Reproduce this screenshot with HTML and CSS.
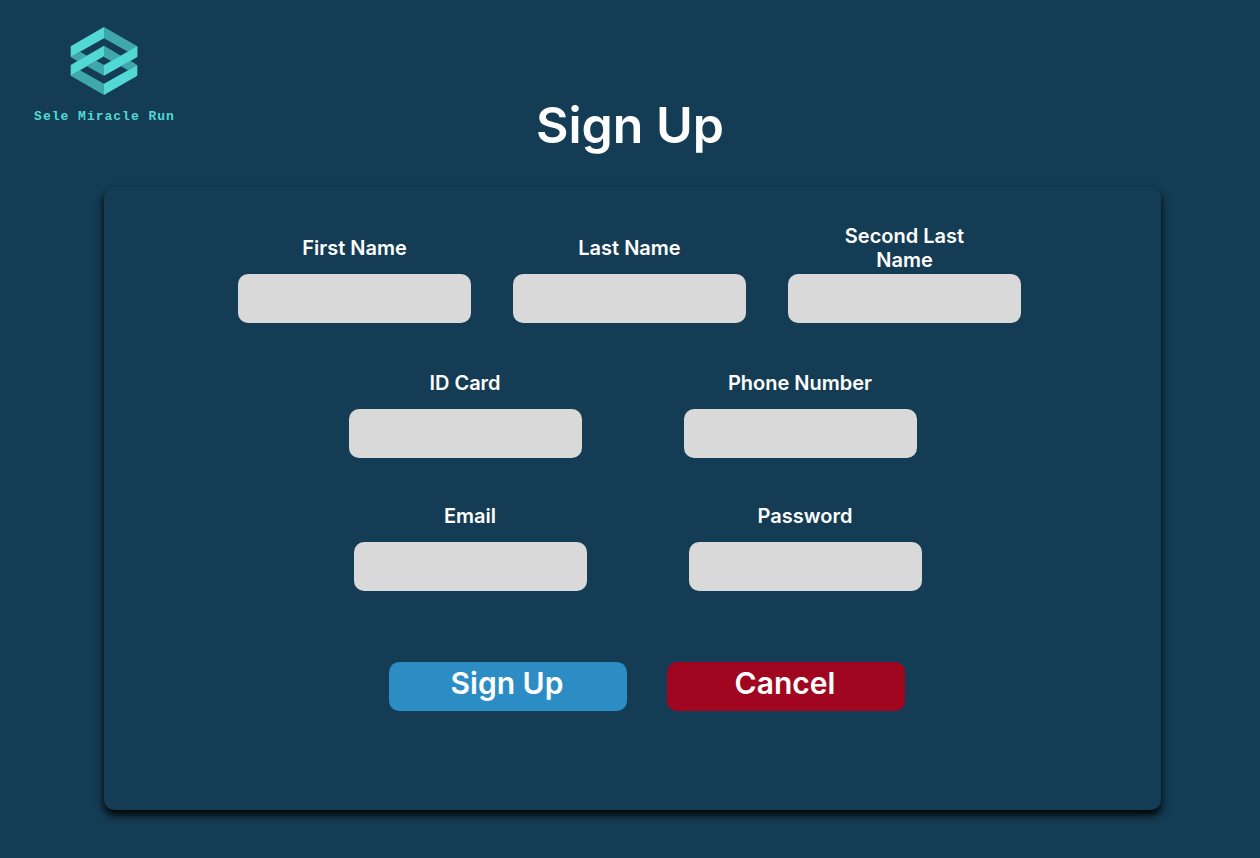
FILE: index.html
```html
<!DOCTYPE html>
<html lang="en">
<head>
<meta charset="utf-8">
<title>Sign Up - Sele Miracle Run</title>
<link rel="stylesheet" href="styles.css">
</head>
<body>
<header class="header">
  <div class="brand">
    <svg class="logo" viewBox="-2 0 204 204" aria-hidden="true">
      <g class="logo-shade">
        <path d="M100 0 200 58V90L100 34Z"/>
        <path d="M100 56 151 86 123 103 100 90Z"/>
        <path d="M0 90 28 74 49 86 21 103Z"/>
        <path d="M49 118 77 101 100 114V146Z"/>
        <path d="M0 146 28 130 100 170V204Z"/>
        <path d="M151 118 179 101 200 114 172 130Z"/>
      </g>
      <g class="logo-light">
        <path d="M100 0V34L0 90V58Z"/>
        <path d="M100 56V88L0 146V114Z"/>
        <path d="M200 58V90L100 146V114Z"/>
        <path d="M200 114V146L100 204V170Z"/>
      </g>
    </svg>
    <span class="brand-name">Sele Miracle Run</span>
  </div>
  <h1 class="title">Sign Up</h1>
</header>
<main>
  <form class="card">
    <div class="row row-names">
      <div class="field"><label for="first">First Name</label><input id="first" type="text"></div>
      <div class="field"><label for="last">Last Name</label><input id="last" type="text"></div>
      <div class="field"><label for="second">Second Last Name</label><input id="second" type="text"></div>
    </div>
    <div class="row row-contact">
      <div class="field"><label for="idcard">ID Card</label><input id="idcard" type="text"></div>
      <div class="field"><label for="phone">Phone Number</label><input id="phone" type="tel"></div>
    </div>
    <div class="row row-account">
      <div class="field"><label for="email">Email</label><input id="email" type="email"></div>
      <div class="field"><label for="password">Password</label><input id="password" type="password"></div>
    </div>
    <div class="actions">
      <button class="button submit" type="submit">Sign Up</button>
      <button class="button cancel" type="button">Cancel</button>
    </div>
  </form>
</main>
</body>
</html>
```
FILE: styles.css
```css
* { box-sizing: border-box; }
body {
  margin: 0;
  min-height: 100vh;
  background: #143c54;
  color: #fff;
  font-family: Inter, sans-serif;
  font-weight: 600;
}
.header {
  display: grid;
  grid-template-columns: 208px 1fr 208px;
  height: 187px;
}
.brand {
  display: flex;
  flex-direction: column;
  align-items: center;
  gap: 14px;
  padding-top: 27px;
}
.logo { width: 68px; height: 68px; }
.logo-light { fill: #52d9d5; }
.logo-shade { fill: #40a8ac; }
.brand-name {
  padding-left: 1px;
  color: #52d9d5;
  font: bold 13px/16px "Liberation Mono", monospace;
  letter-spacing: 1px;
  white-space: nowrap;
}
.title {
  margin: 0;
  padding-top: 95px;
  font-size: 50px;
  line-height: 60px;
  font-weight: 600;
  text-align: center;
}
.card {
  margin: 0 99px 48px 104px;
  padding: 36px 0 99px;
  border-radius: 10px;
  background: #143c54;
  box-shadow: 0 5px 8px #000;
}
.row { display: flex; justify-content: center; }
.row-names { gap: 42px; padding-right: 6px; }
.row-contact { gap: 102px; margin-top: 35px; }
.row-account { gap: 102px; margin-top: 33px; padding-left: 10px; }
.field {
  display: flex;
  flex-direction: column;
  align-items: center;
  width: 233px;
}
.field label {
  display: flex;
  align-items: center;
  width: 150px;
  height: 51px;
  padding-bottom: 2px;
  justify-content: center;
  text-align: center;
  font-size: 20px;
  line-height: 24px;
}
.field input {
  width: 100%;
  height: 49px;
  padding: 0 12px;
  border: 0;
  border-radius: 10px;
  background: #d9d9d9;
  font: 400 18px Inter, sans-serif;
}
.actions {
  display: flex;
  justify-content: center;
  gap: 40px;
  margin-top: 71px;
  padding-left: 29px;
}
.button {
  width: 238px;
  height: 49px;
  padding: 0 2px 8px 0;
  border: 0;
  border-radius: 10px;
  color: #fff;
  font: 600 30px/36px Inter, sans-serif;
}
.submit { background: #2c8dc5; }
.cancel { background: #a00620; }
```
